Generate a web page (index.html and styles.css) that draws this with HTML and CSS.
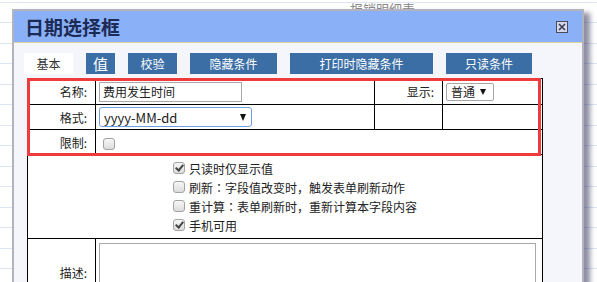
FILE: index.html
```html
<!DOCTYPE html>
<html>
<head>
<meta charset="utf-8">
<title>日期选择框</title>
<link rel="stylesheet" href="styles.css">
</head>
<body>
<div class="page">
  <div class="page-title">报销明细表</div>
</div>
<div class="dialog">
  <div class="dialog-head">
    <span class="dialog-title">日期选择框</span>
    <span class="close-btn">
      <svg width="12" height="12" viewBox="0 0 12 12">
        <rect x="0.5" y="0.5" width="11" height="11" fill="#d3d7ec" stroke="#4a4a5a"/>
        <path d="M3 3 L9 9 M9 3 L3 9" stroke="#3c3c50" stroke-width="1.6"/>
      </svg>
    </span>
  </div>
  <div class="dialog-body">
    <div class="tabs">
      <span class="tab active">基本</span>
      <span class="tab tab-value">值</span>
      <span class="tab">校验</span>
      <span class="tab">隐藏条件</span>
      <span class="tab">打印时隐藏条件</span>
      <span class="tab">只读条件</span>
    </div>
    <div class="form-wrap">
      <table class="form">
        <colgroup>
          <col class="c1"><col class="c2"><col class="c3"><col class="c4">
        </colgroup>
        <tr class="r-name">
          <td class="label">名称:</td>
          <td><div class="input">费用发生时间</div></td>
          <td class="label">显示:</td>
          <td><div class="select select-small">普通<span class="arrow"></span></div></td>
        </tr>
        <tr class="r-format">
          <td class="label">格式:</td>
          <td><div class="select select-focus">yyyy-MM-dd<span class="arrow"></span></div></td>
          <td></td>
          <td></td>
        </tr>
        <tr class="r-limit">
          <td class="label">限制:</td>
          <td colspan="3"><span class="cb cb-limit"></span></td>
        </tr>
        <tr class="r-opts">
          <td colspan="4" class="opts">
            <div class="opt"><span class="cb on"></span>只读时仅显示值</div>
            <div class="opt"><span class="cb"></span>刷新<span class="colon">：</span>字段值改变时，触发表单刷新动作</div>
            <div class="opt"><span class="cb"></span>重计算<span class="colon">：</span>表单刷新时，重新计算本字段内容</div>
            <div class="opt"><span class="cb on"></span>手机可用</div>
          </td>
        </tr>
        <tr class="r-desc">
          <td class="label">描述:</td>
          <td colspan="3"><div class="textarea"></div></td>
        </tr>
      </table>
      <div class="mark"></div>
    </div>
  </div>
</div>
</body>
</html>
```

FILE: styles.css
```css
body {
  margin: 0;
  font-family: "Noto Sans CJK SC", "Noto Sans", sans-serif;
  font-size: 12px;
  color: #222;
  background: #fff repeating-linear-gradient(to bottom, #fff 0, #fff 2px, #dde5f4 2px, #dde5f4 3px, #fff 3px, #fff 20.5px);
}
.page {
  height: 282px;
}
.page-title {
  padding: 1px 0 0 350px;
  font-size: 13px;
  line-height: 16px;
  color: #8a8a8a;
}
.dialog {
  position: absolute;
  left: 12px;
  top: 9px;
  width: 568px;
  height: 300px;
  border: 2px solid #b3b3bd;
  border-bottom: none;
  background: #f5f6fc;
  box-shadow: 6px 4px 5px rgba(50, 50, 90, 0.55);
}
.dialog-head {
  height: 31px;
  background: #8ab0f8;
  border-bottom: 1px solid #dcd5a2;
  display: flex;
  align-items: center;
  justify-content: space-between;
  padding: 0 14px 0 11px;
}
.dialog-title {
  font-size: 19px;
  font-weight: bold;
  color: #1c2b55;
}
.close-btn {
  display: flex;
  width: 12px;
  height: 12px;
}
.dialog-body {
  padding: 10px 0 0 10px;
}
.tabs {
  display: flex;
  height: 21px;
  margin-bottom: 4px;
}
.tab {
  display: flex;
  align-items: center;
  justify-content: center;
  margin-right: 13px;
  background: #3a6ea5;
  color: #fff;
  font-size: 12px;
}
.tab:nth-child(1) { width: 49px; }
.tab:nth-child(2) { width: 29px; }
.tab:nth-child(3) { width: 49px; }
.tab:nth-child(4) { width: 87px; }
.tab:nth-child(5) { width: 143px; }
.tab:nth-child(6) { width: 86px; }
.tab.active {
  background: #fff;
  color: #333;
}
.tab-value {
  font-size: 15px;
}
.form-wrap {
  position: relative;
  margin-left: 3px;
}
.form {
  border-collapse: collapse;
  table-layout: fixed;
  width: 515px;
  background: #fff;
}
.c1 { width: 68px; }
.c2 { width: 279px; }
.c3 { width: 68px; }
.c4 { width: 100px; }
.form td {
  border: 1px solid #000;
  padding: 0;
  vertical-align: middle;
}
.form .label {
  text-align: right;
  padding-right: 8px;
}
.r-name td { height: 25px; }
.r-format td { height: 24px; }
.r-limit td { height: 24px; }
.r-opts td { height: 83px; }
.r-desc td { height: 66px; }
.input {
  box-sizing: border-box;
  width: 143px;
  height: 20px;
  margin-left: 3px;
  padding-left: 3px;
  border: 1px solid #a9a9a9;
  line-height: 18px;
}
.select {
  box-sizing: border-box;
  display: flex;
  align-items: center;
  justify-content: space-between;
  margin-left: 3px;
  border: 1px solid #a6a6a6;
  border-radius: 2px;
  background: #fff;
}
.select-small {
  width: 48px;
  height: 18px;
  padding: 0 7px 0 4px;
}
.select-focus {
  width: 153px;
  height: 20px;
  padding: 0 5px 0 4px;
  border-color: #6f9fe2;
  border-radius: 3px;
  font-size: 13px;
}
.arrow {
  width: 0;
  height: 0;
  border-left: 3px solid transparent;
  border-right: 3px solid transparent;
  border-top: 6px solid #111;
}
.select-focus .arrow {
  border-left-width: 3.5px;
  border-right-width: 3.5px;
  border-top-width: 7px;
}
.cb {
  box-sizing: border-box;
  display: inline-block;
  position: relative;
  width: 12px;
  height: 12px;
  border: 1px solid #a3a3a3;
  border-radius: 3px;
  background: linear-gradient(#f6f6f6, #dcdcdc);
  vertical-align: middle;
}
.cb.on::after {
  content: "";
  position: absolute;
  left: 3px;
  top: 0;
  width: 3px;
  height: 6px;
  border: solid #444;
  border-width: 0 2px 2px 0;
  transform: rotate(40deg);
}
.cb-limit {
  margin-left: 7px;
}
.opts {
  padding-left: 145px !important;
}
.opt {
  display: flex;
  align-items: center;
  height: 19px;
}
.opt .cb {
  margin-right: 4px;
}
.colon {
  font-family: "Noto Sans CJK TC", sans-serif;
}
.textarea {
  box-sizing: border-box;
  width: 437px;
  height: 58px;
  margin: 4px 0 4px 3px;
  border: 1px solid #aaa;
}
.mark {
  position: absolute;
  left: 0;
  top: 0;
  box-sizing: border-box;
  width: 514px;
  height: 78px;
  border: 3px solid #ef3b3b;
}
```
